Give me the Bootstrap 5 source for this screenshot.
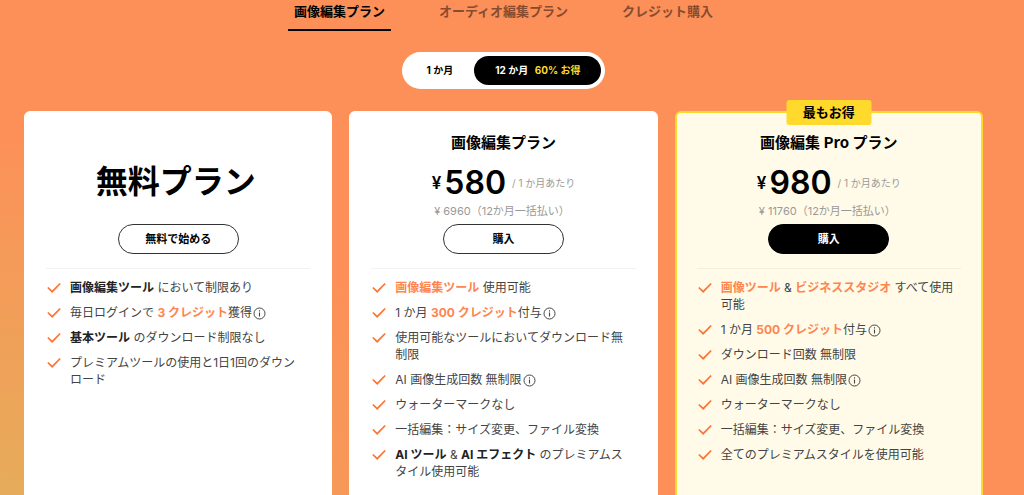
<!DOCTYPE html>
<html lang="ja">
<head>
<meta charset="utf-8">
<meta name="viewport" content="width=device-width, initial-scale=1">
<title>料金プラン</title>
<link href="https://cdn.jsdelivr.net/npm/bootstrap@5.3.0/dist/css/bootstrap.min.css" rel="stylesheet">
<style>
  :root { --accent: #ff8550; --gold: #ffd92b; }
  body {
    font-family: Inter, "Noto Sans CJK JP", sans-serif;
    font-size: 12px; line-height: 17px; color: #444;
    min-height: 100vh; padding-right: 17px;
    background: radial-gradient(circle at 0 115%, #e3b15a 0, #e6ac5a 90px, #fd9058 460px) #fd9058;
  }
  .plan-tabs { gap: 42px; height: 31px; }
  .plan-tabs .nav-link { padding: 0 6px; height: 31px; line-height: 22px; font-size: 13px; font-weight: 700; color: #874c2f; border-bottom: 2px solid transparent; border-radius: 0; }
  .plan-tabs .nav-link.active { color: #000; border-color: #000; }
  .period { margin-top: 21px; padding: 4px; height: 37px; background: #fff; }
  .period .btn { border: 0; font-size: 10px; line-height: 29px; font-weight: 700; padding: 0 21px; color: #000; }
  .period .btn.active { background: #000; color: #fff; }
  .save { color: var(--gold); margin-left: 4px; }
  .plans { padding: 0 24px; margin-top: 22px; gap: 17px; }
  .plan { flex: 1 1 0; min-width: 0; min-height: 400px; border: 1px solid #fff; border-radius: 6px; padding: 19px 21px 10px; background: #fff; }
  .plan-pro { border: 2px solid var(--gold); background: #fffbe8; padding: 18px 20px 10px; }
  .ribbon { background: var(--gold); border-radius: 3px; top: -13px; height: 25px; line-height: 25px; width: 85px; font-size: 13px; font-weight: 700; color: #000; }
  .plan-top { height: 93px; }
  .plan h2 { font-family: "Noto Sans CJK JP", sans-serif; font-size: 15px; line-height: 22px; font-weight: 700; color: #000; margin: 0; }
  .plan .free-name { font-size: 32px; line-height: 96px; padding-right: 5px; }
  .price { color: #000; height: 40px; margin-top: 10px; gap: 3px; }
  .yen { font-size: 17px; font-weight: 600; }
  .amount { font-size: 32px; line-height: 40px; font-weight: 600; }
  .per { font-size: 10px; color: #999; margin-left: 3px; }
  .total { font-size: 11px; color: #999; line-height: 16px; padding-right: 3px; }
  .buy { width: 121px; height: 30px; padding: 0; font-size: 11px; line-height: 26px; font-weight: 700; color: #000; border: 1px solid #333; background: #fff; }
  .plan-pro .buy { background: #000; border-color: #000; color: #fff; }
  .plan hr { margin: 14px 0 10px; border-color: #ccc; }
  .features { gap: 8px; padding-right: 5px; }
  .features li { gap: 9px; }
  .features b { color: #222; }
  .features .hot { color: var(--accent); }
  .tick { width: 15px; height: 17px; flex: none; }
  .info { width: 13px; height: 13px; margin-left: 1px; vertical-align: -3px; }
</style>
</head>
<body>
<svg class="d-none">
  <symbol id="tick" viewBox="0 0 15 17"><path d="M1.800 8.500l4.400 4.200 8-8.200" fill="none" stroke="#fd7434" stroke-width="1.700"/></symbol>
  <symbol id="info" viewBox="0 0 13 13"><circle cx="6.500" cy="6.500" r="5.500" fill="none" stroke="#444"/><path d="M6.500 5.500v4M6.500 3.200v1.200" stroke="#444" stroke-width="1.100"/></symbol>
</svg>
<nav class="nav plan-tabs justify-content-center">
  <a class="nav-link active" href="#image">画像編集プラン</a>
  <a class="nav-link" href="#audio">オーディオ編集プラン</a>
  <a class="nav-link" href="#credit">クレジット購入</a>
</nav>
<main>
  <div class="d-flex justify-content-center">
    <div class="period d-flex rounded-pill">
      <button type="button" class="btn rounded-pill">1 か月</button>
      <button type="button" class="btn rounded-pill active">12 か月 <span class="save">60% お得</span></button>
    </div>
  </div>
  <div class="plans d-flex">
    <section class="plan">
      <div class="plan-top text-center"><h2 class="free-name">無料プラン</h2></div>
      <div class="text-center"><button type="button" class="btn buy rounded-pill">無料で始める</button></div>
      <hr>
      <ul class="features list-unstyled d-flex flex-column mb-0">
        <li class="d-flex"><svg class="tick"><use href="#tick"/></svg><div><b>画像編集ツール</b> において制限あり</div></li>
        <li class="d-flex"><svg class="tick"><use href="#tick"/></svg><div>毎日ログインで <b class="hot">3 クレジット</b>獲得<svg class="info"><use href="#info"/></svg></div></li>
        <li class="d-flex"><svg class="tick"><use href="#tick"/></svg><div><b>基本ツール</b> のダウンロード制限なし</div></li>
        <li class="d-flex"><svg class="tick"><use href="#tick"/></svg><div>プレミアムツールの使用と1日1回のダウンロード</div></li>
      </ul>
    </section>
    <section class="plan">
      <div class="plan-top text-center">
        <h2>画像編集プラン</h2>
        <div class="price d-flex justify-content-center align-items-center"><span class="yen">¥</span><span class="amount">580</span><span class="per">/ 1 か月あたり</span></div>
        <div class="total">¥ 6960（12か月一括払い）</div>
      </div>
      <div class="text-center"><button type="button" class="btn buy rounded-pill">購入</button></div>
      <hr>
      <ul class="features list-unstyled d-flex flex-column mb-0">
        <li class="d-flex"><svg class="tick"><use href="#tick"/></svg><div><b class="hot">画像編集ツール</b> 使用可能</div></li>
        <li class="d-flex"><svg class="tick"><use href="#tick"/></svg><div>1 か月 <b class="hot">300 クレジット</b>付与<svg class="info"><use href="#info"/></svg></div></li>
        <li class="d-flex"><svg class="tick"><use href="#tick"/></svg><div>使用可能なツールにおいてダウンロード無制限</div></li>
        <li class="d-flex"><svg class="tick"><use href="#tick"/></svg><div>AI 画像生成回数 無制限<svg class="info"><use href="#info"/></svg></div></li>
        <li class="d-flex"><svg class="tick"><use href="#tick"/></svg><div>ウォーターマークなし</div></li>
        <li class="d-flex"><svg class="tick"><use href="#tick"/></svg><div>一括編集：サイズ変更、ファイル変換</div></li>
        <li class="d-flex"><svg class="tick"><use href="#tick"/></svg><div><b>AI ツール</b> &amp; <b>AI エフェクト</b> のプレミアムスタイル使用可能</div></li>
      </ul>
    </section>
    <section class="plan plan-pro position-relative">
      <div class="ribbon position-absolute start-50 translate-middle-x text-center">最もお得</div>
      <div class="plan-top text-center">
        <h2>画像編集 Pro プラン</h2>
        <div class="price d-flex justify-content-center align-items-center"><span class="yen">¥</span><span class="amount">980</span><span class="per">/ 1 か月あたり</span></div>
        <div class="total">¥ 11760（12か月一括払い）</div>
      </div>
      <div class="text-center"><button type="button" class="btn buy rounded-pill">購入</button></div>
      <hr>
      <ul class="features list-unstyled d-flex flex-column mb-0">
        <li class="d-flex"><svg class="tick"><use href="#tick"/></svg><div><b class="hot">画像ツール</b> &amp; <b class="hot">ビジネススタジオ</b> すべて使用可能</div></li>
        <li class="d-flex"><svg class="tick"><use href="#tick"/></svg><div>1 か月 <b class="hot">500 クレジット</b>付与<svg class="info"><use href="#info"/></svg></div></li>
        <li class="d-flex"><svg class="tick"><use href="#tick"/></svg><div>ダウンロード回数 無制限</div></li>
        <li class="d-flex"><svg class="tick"><use href="#tick"/></svg><div>AI 画像生成回数 無制限<svg class="info"><use href="#info"/></svg></div></li>
        <li class="d-flex"><svg class="tick"><use href="#tick"/></svg><div>ウォーターマークなし</div></li>
        <li class="d-flex"><svg class="tick"><use href="#tick"/></svg><div>一括編集：サイズ変更、ファイル変換</div></li>
        <li class="d-flex"><svg class="tick"><use href="#tick"/></svg><div>全てのプレミアムスタイルを使用可能</div></li>
      </ul>
    </section>
  </div>
</main>
<script src="https://cdn.jsdelivr.net/npm/bootstrap@5.3.0/dist/js/bootstrap.bundle.min.js"></script>
</body>
</html>
